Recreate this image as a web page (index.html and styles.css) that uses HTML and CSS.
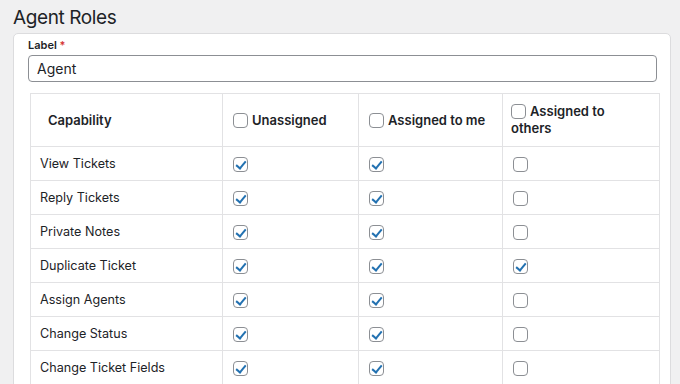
FILE: index.html
```html
<!DOCTYPE html>
<html lang="en">
<head>
<meta charset="utf-8">
<title>Agent Roles</title>
<link rel="stylesheet" href="styles.css">
</head>
<body>
<h1 class="title">Agent Roles</h1>
<div class="card">
  <div class="field-label">Label <span class="req">*</span></div>
  <input class="text-input" type="text" value="Agent">
  <table class="caps">
    <colgroup>
      <col class="c1"><col class="c2"><col class="c3"><col class="c4">
    </colgroup>
    <thead>
      <tr>
        <th class="cap-head">Capability</th>
        <th><span class="hcell"><span class="cb"></span><span>Unassigned</span></span></th>
        <th><span class="hcell"><span class="cb"></span><span>Assigned to me</span></span></th>
        <th class="wrap"><span class="cb inline"></span>Assigned to others</th>
      </tr>
    </thead>
    <tbody>
      <tr><td>View Tickets</td><td><span class="cb on"></span></td><td><span class="cb on"></span></td><td><span class="cb"></span></td></tr>
      <tr><td>Reply Tickets</td><td><span class="cb on"></span></td><td><span class="cb on"></span></td><td><span class="cb"></span></td></tr>
      <tr><td>Private Notes</td><td><span class="cb on"></span></td><td><span class="cb on"></span></td><td><span class="cb"></span></td></tr>
      <tr><td>Duplicate Ticket</td><td><span class="cb on"></span></td><td><span class="cb on"></span></td><td><span class="cb on"></span></td></tr>
      <tr><td>Assign Agents</td><td><span class="cb on"></span></td><td><span class="cb on"></span></td><td><span class="cb"></span></td></tr>
      <tr><td>Change Status</td><td><span class="cb on"></span></td><td><span class="cb on"></span></td><td><span class="cb"></span></td></tr>
      <tr><td>Change Ticket Fields</td><td><span class="cb on"></span></td><td><span class="cb on"></span></td><td><span class="cb"></span></td></tr>
    </tbody>
  </table>
</div>
</body>
</html>
```
FILE: styles.css
```css
* { box-sizing: border-box; }
html, body {
  margin: 0;
  padding: 0;
  background: #f0f0f1;
  font-family: "Inter", "Liberation Sans", sans-serif;
  color: #1d2327;
  overflow: hidden;
}
.title {
  margin: 0;
  padding: 6px 0 0 13px;
  height: 33px;
  font-size: 19px;
  font-weight: 400;
  line-height: 24px;
  letter-spacing: -0.4px;
}
.card {
  margin-left: 13px;
  width: 658px;
  background: #fff;
  border: 1px solid #dcdcde;
  border-radius: 5px;
  padding: 4px 13px 20px 14px;
  height: 400px;
}
.field-label {
  font-size: 11px;
  font-weight: 600;
  line-height: 14px;
  height: 17px;
}
.req { color: #d63638; }
.text-input {
  display: block;
  width: 629px;
  height: 27px;
  border: 1px solid #8c8f94;
  border-radius: 4px;
  padding: 0 8px;
  font-family: inherit;
  font-size: 14px;
  color: #1d2327;
  background: #fff;
  outline: none;
}
.caps {
  margin: 11px 0 0 2px;
  width: 629px;
  border-collapse: collapse;
  table-layout: fixed;
  font-size: 12.6px;
}
.c1 { width: 192px; }
.c2 { width: 136px; }
.c3 { width: 144px; }
.c4 { width: 157px; }
.caps th, .caps td {
  border: 1px solid #e2e2e4;
  text-align: left;
  vertical-align: middle;
  padding: 0 10px 0 9px;
}
.caps th {
  height: 53px;
  font-weight: 600;
  font-size: 13px;
  line-height: 17px;
  padding-left: 10px;
}
.caps th.cap-head { padding-left: 17px; }
.caps th.wrap { padding: 0 28px 0 8px; }
.caps td { height: 34px; }
.hcell {
  display: flex;
  align-items: center;
  gap: 4px;
}
.cb {
  display: inline-block;
  width: 15px;
  height: 15px;
  border: 1px solid #8c8f94;
  border-radius: 4px;
  vertical-align: middle;
  position: relative;
  background: #fff;
}
.cb.inline { vertical-align: -3px; margin-right: 4px; }
.caps td:not(:first-child) { padding-left: 10px; }
.caps td .cb { margin-top: 2px; }
.cb.on::after {
  content: "";
  position: absolute;
  left: 4px;
  top: 1px;
  width: 4px;
  height: 8px;
  border: solid #2271b1;
  border-width: 0 2px 2px 0;
  transform: rotate(40deg);
}
```
